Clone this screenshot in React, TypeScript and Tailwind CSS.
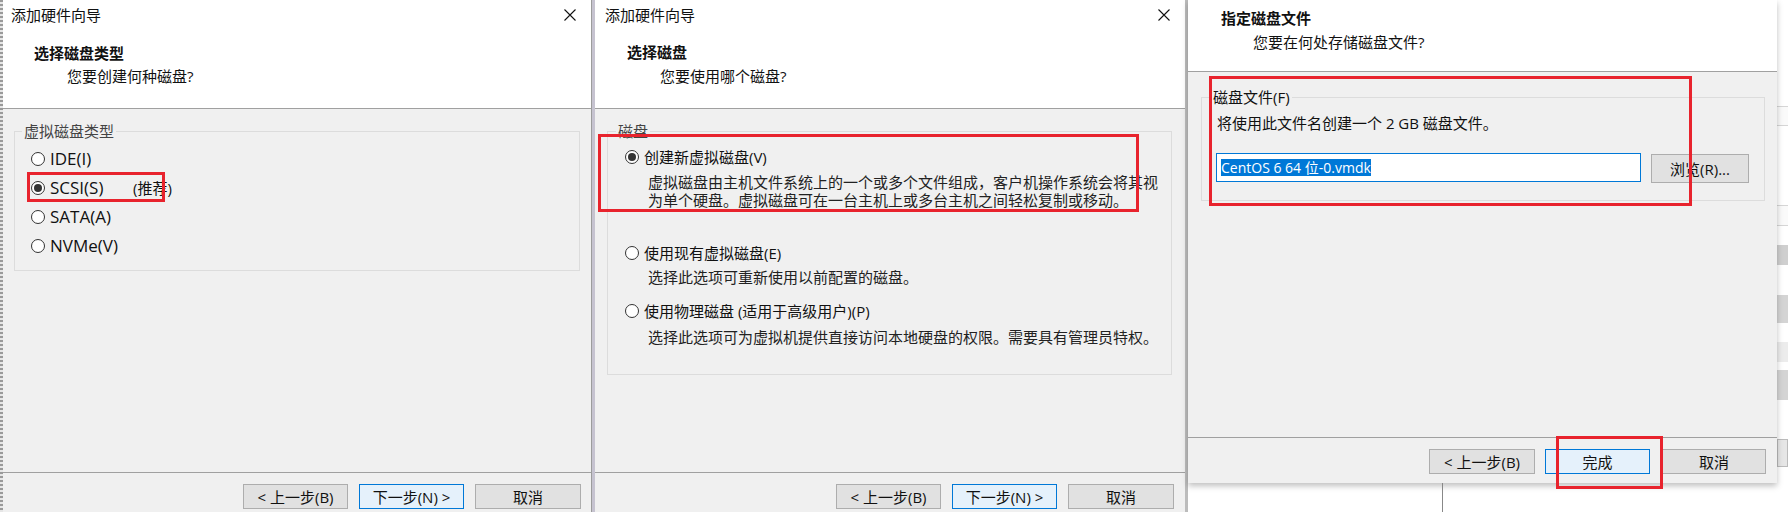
import React from "react";

const Radio = ({ checked }: { checked?: boolean }) => (
  <span className="flex h-[14px] w-[14px] shrink-0 items-center justify-center rounded-full border border-[#333] bg-white">
    {checked && <span className="h-[8px] w-[8px] rounded-full bg-[#333]" />}
  </span>
);

const Btn = ({
  children,
  primary,
  w = "w-[105px]",
}: {
  children: React.ReactNode;
  primary?: boolean;
  w?: string;
}) => (
  <div
    className={`flex h-[25px] shrink-0 items-center justify-center border text-[15px] leading-[20px] text-[#111] ${w} ${
      primary ? "border-[#0078d7] bg-[#e5f1fb]" : "border-[#adadad] bg-[#e1e1e1]"
    }`}
  >
    {children}
  </div>
);

const CloseX = () => (
  <svg width="12" height="12" viewBox="0 0 12 12" className="shrink-0">
    <path d="M0.5 0.5L11.5 11.5M11.5 0.5L0.5 11.5" stroke="#111" strokeWidth="1.1" fill="none" />
  </svg>
);

const Red = ({ className }: { className: string }) => (
  <div className={`pointer-events-none absolute border-[3px] border-[#e8232d] ${className}`} />
);

const Header = ({ title, sub }: { title: string; sub: string }) => (
  <div className="h-[109px] shrink-0 border-b border-[#a0a0a0] bg-white">
    <div className="flex h-[30px] items-center justify-between pl-[8px] pr-[15px]">
      <span className="text-[15px] leading-[20px]">添加硬件向导</span>
      <CloseX />
    </div>
    <div className="mt-[13px] pl-[31px] text-[15px] font-bold leading-[20px]">{title}</div>
    <div className="mt-[3px] pl-[64px] text-[15px] leading-[20px]">{sub}</div>
  </div>
);

const Footer = ({ pr }: { pr: string }) => (
  <div className={`mt-auto flex h-[40px] shrink-0 justify-end gap-[11px] border-t border-[#a0a0a0] pt-[11px] ${pr}`}>
    <Btn>&lt; 上一步(B)</Btn>
    <Btn primary>下一步(N) &gt;</Btn>
    <Btn w="w-[106px]">取消</Btn>
  </div>
);

const TypeRow = ({ label, checked, extra }: { label: string; checked?: boolean; extra?: string }) => (
  <div className="flex h-[29px] items-center gap-[5px] pl-[16px]">
    <Radio checked={checked} />
    <span className="text-[15px] leading-[20px]">
      <span className="inline-block w-[83px] text-[17px]">{label}</span>
      {extra}
    </span>
  </div>
);

const DiskOption = ({ label, checked }: { label: string; checked?: boolean }) => (
  <div className="flex h-[20px] items-center gap-[5px] pl-[17px]">
    <Radio checked={checked} />
    <span className="text-[15px] leading-[20px]">{label}</span>
  </div>
);

export default function App() {
  return (
    <div className="flex h-[512px] w-[1788px] overflow-hidden bg-white font-['Open_Sans','Noto_Sans_CJK_SC',sans-serif] text-[#111]">
      <div className="h-full w-[3px] shrink-0 bg-[repeating-linear-gradient(to_bottom,#9a9a9a_0px,#9a9a9a_2px,#e6e6e6_2px,#e6e6e6_4px)]" />

      {/* 选择磁盘类型 */}
      <div className="relative flex h-full w-[588px] shrink-0 flex-col bg-[#f0f0f0]">
        <Header title="选择磁盘类型" sub="您要创建何种磁盘?" />
        <fieldset className="ml-[11px] mr-[11px] mt-[13px] border border-[#dcdcdc] pb-[10px]">
          <legend className="ml-[7px] px-[2px] text-[15px] leading-[18px] text-[#444]">虚拟磁盘类型</legend>
          <div className="pt-[4px]">
            <TypeRow label="IDE(I)" />
            <TypeRow label="SCSI(S)" checked extra="(推荐)" />
            <TypeRow label="SATA(A)" />
            <TypeRow label="NVMe(V)" />
          </div>
        </fieldset>
        <Footer pr="pr-[10px]" />
        <Red className="left-[24px] top-[172px] h-[30px] w-[138px]" />
      </div>

      <div className="flex h-full w-[4px] shrink-0">
        <div className="h-full w-[1px] bg-[#9c9c9c]" />
        <div className="h-full w-[3px] bg-[#c6c3d0]" />
      </div>

      {/* 选择磁盘 */}
      <div className="relative flex h-full w-[590px] shrink-0 flex-col bg-[#f0f0f0]">
        <div className="h-[109px] shrink-0 border-b border-[#a0a0a0] bg-white">
          <div className="flex h-[30px] items-center justify-between pl-[10px] pr-[15px]">
            <span className="text-[15px] leading-[20px]">添加硬件向导</span>
            <CloseX />
          </div>
          <div className="mt-[12px] pl-[32px] text-[15px] font-bold leading-[20px]">选择磁盘</div>
          <div className="mt-[4px] pl-[65px] text-[15px] leading-[20px]">您要使用哪个磁盘?</div>
        </div>
        <fieldset className="ml-[12px] mr-[13px] mt-[13px] border border-[#dcdcdc] pb-[28px]">
          <legend className="ml-[8px] px-[2px] text-[15px] leading-[18px] text-[#444]">磁盘</legend>
          <div className="pt-[7px]">
            <DiskOption label="创建新虚拟磁盘(V)" checked />
            <div className="mt-[6px] whitespace-nowrap pl-[40px] text-[15px] leading-[18px] text-[#222]">
              虚拟磁盘由主机文件系统上的一个或多个文件组成，客户机操作系统会将其视
              <br />
              为单个硬盘。虚拟磁盘可在一台主机上或多台主机之间轻松复制或移动。
            </div>
            <div className="mt-[34px]">
              <DiskOption label="使用现有虚拟磁盘(E)" />
            </div>
            <div className="mt-[5px] whitespace-nowrap pl-[40px] text-[15px] leading-[18px] text-[#222]">
              选择此选项可重新使用以前配置的磁盘。
            </div>
            <div className="mt-[15px]">
              <DiskOption label="使用物理磁盘 (适用于高级用户)(P)" />
            </div>
            <div className="mt-[7px] whitespace-nowrap pl-[40px] text-[15px] leading-[18px] text-[#222]">
              选择此选项可为虚拟机提供直接访问本地硬盘的权限。需要具有管理员特权。
            </div>
          </div>
        </fieldset>
        <Footer pr="pr-[11px]" />
        <Red className="left-[3px] top-[134px] h-[78px] w-[541px]" />
      </div>

      <div className="h-full w-[3px] shrink-0 bg-[#bcbcbc]" />

      {/* 指定磁盘文件 */}
      <div className="relative flex h-full w-[589px] shrink-0 flex-col bg-white">
        <div className="flex h-[483px] shrink-0 flex-col bg-[#f0f0f0] shadow-[0_3px_6px_rgba(0,0,0,0.25)]">
          <div className="h-[72px] shrink-0 border-b border-[#a0a0a0] bg-white">
            <div className="pl-[33px] pt-[8px] text-[15px] font-bold leading-[20px]">指定磁盘文件</div>
            <div className="mt-[4px] pl-[65px] text-[15px] leading-[20px]">您要在何处存储磁盘文件?</div>
          </div>
          <fieldset className="ml-[13px] mr-[12px] mt-[16px] border border-[#dcdcdc] pb-[17px]">
            <legend className="ml-[9px] px-[2px] text-[15px] leading-[18px] text-[#111]">磁盘文件(F)</legend>
            <div className="pl-[14px]">
              <div className="mt-[8px] pl-[1px] text-[15px] leading-[18px]">将使用此文件名创建一个 2 GB 磁盘文件。</div>
              <div className="mt-[21px] flex items-start gap-[10px]">
                <div className="flex h-[29px] w-[425px] items-center border border-[#0078d7] bg-white pl-[4px]">
                  <span className="bg-[#0078d7] text-[14px] leading-[17px] text-white">CentOS 6 64 位-0.vmdk</span>
                </div>
                <div className="mt-[1px]">
                  <Btn w="w-[98px] h-[29px]">浏览(R)...</Btn>
                </div>
              </div>
            </div>
          </fieldset>
          <div className="mt-auto flex h-[46px] shrink-0 justify-end border-t border-[#a0a0a0] pr-[11px] pt-[11px]">
            <Btn w="w-[106px]">&lt; 上一步(B)</Btn>
            <div className="ml-[10px]">
              <Btn primary>完成</Btn>
            </div>
            <div className="ml-[12px]">
              <Btn w="w-[104px]">取消</Btn>
            </div>
          </div>
        </div>
        <div className="flex flex-1 pl-[254px]">
          <div className="h-full w-[1px] bg-[#888]" />
        </div>
        <Red className="left-[21px] top-[76px] h-[130px] w-[483px]" />
        <Red className="left-[368px] top-[436px] h-[53px] w-[107px]" />
      </div>

      {/* 背景窗口 */}
      <div className="flex h-full w-[11px] shrink-0 flex-col overflow-hidden bg-white text-[13px] leading-[18px] text-[#777]">
        <div className="h-[106px] shrink-0" />
        <div className="h-[20px] shrink-0 border-y border-[#d6d6d6] bg-[#fafafa]" />
        <div className="h-[79px] shrink-0" />
        <div className="h-[21px] shrink-0 border-y border-[#d6d6d6] bg-[#fafafa]" />
        <div className="h-[19px] shrink-0" />
        <div className="h-[20px] shrink-0 bg-[#cfcfcf]" />
        <div className="h-[30px] shrink-0" />
        <div className="h-[28px] shrink-0 bg-[#d4d4d4]" />
        <div className="h-[19px] shrink-0" />
        <div className="h-[20px] shrink-0 bg-[#ececec]" />
        <div className="h-[8px] shrink-0" />
        <div className="h-[30px] shrink-0 bg-[#d4d4d4]" />
        <div className="h-[39px] shrink-0" />
        <div className="h-[28px] shrink-0 border border-[#bbb] bg-[#e6e6e6]" />
      </div>
    </div>
  );
}
